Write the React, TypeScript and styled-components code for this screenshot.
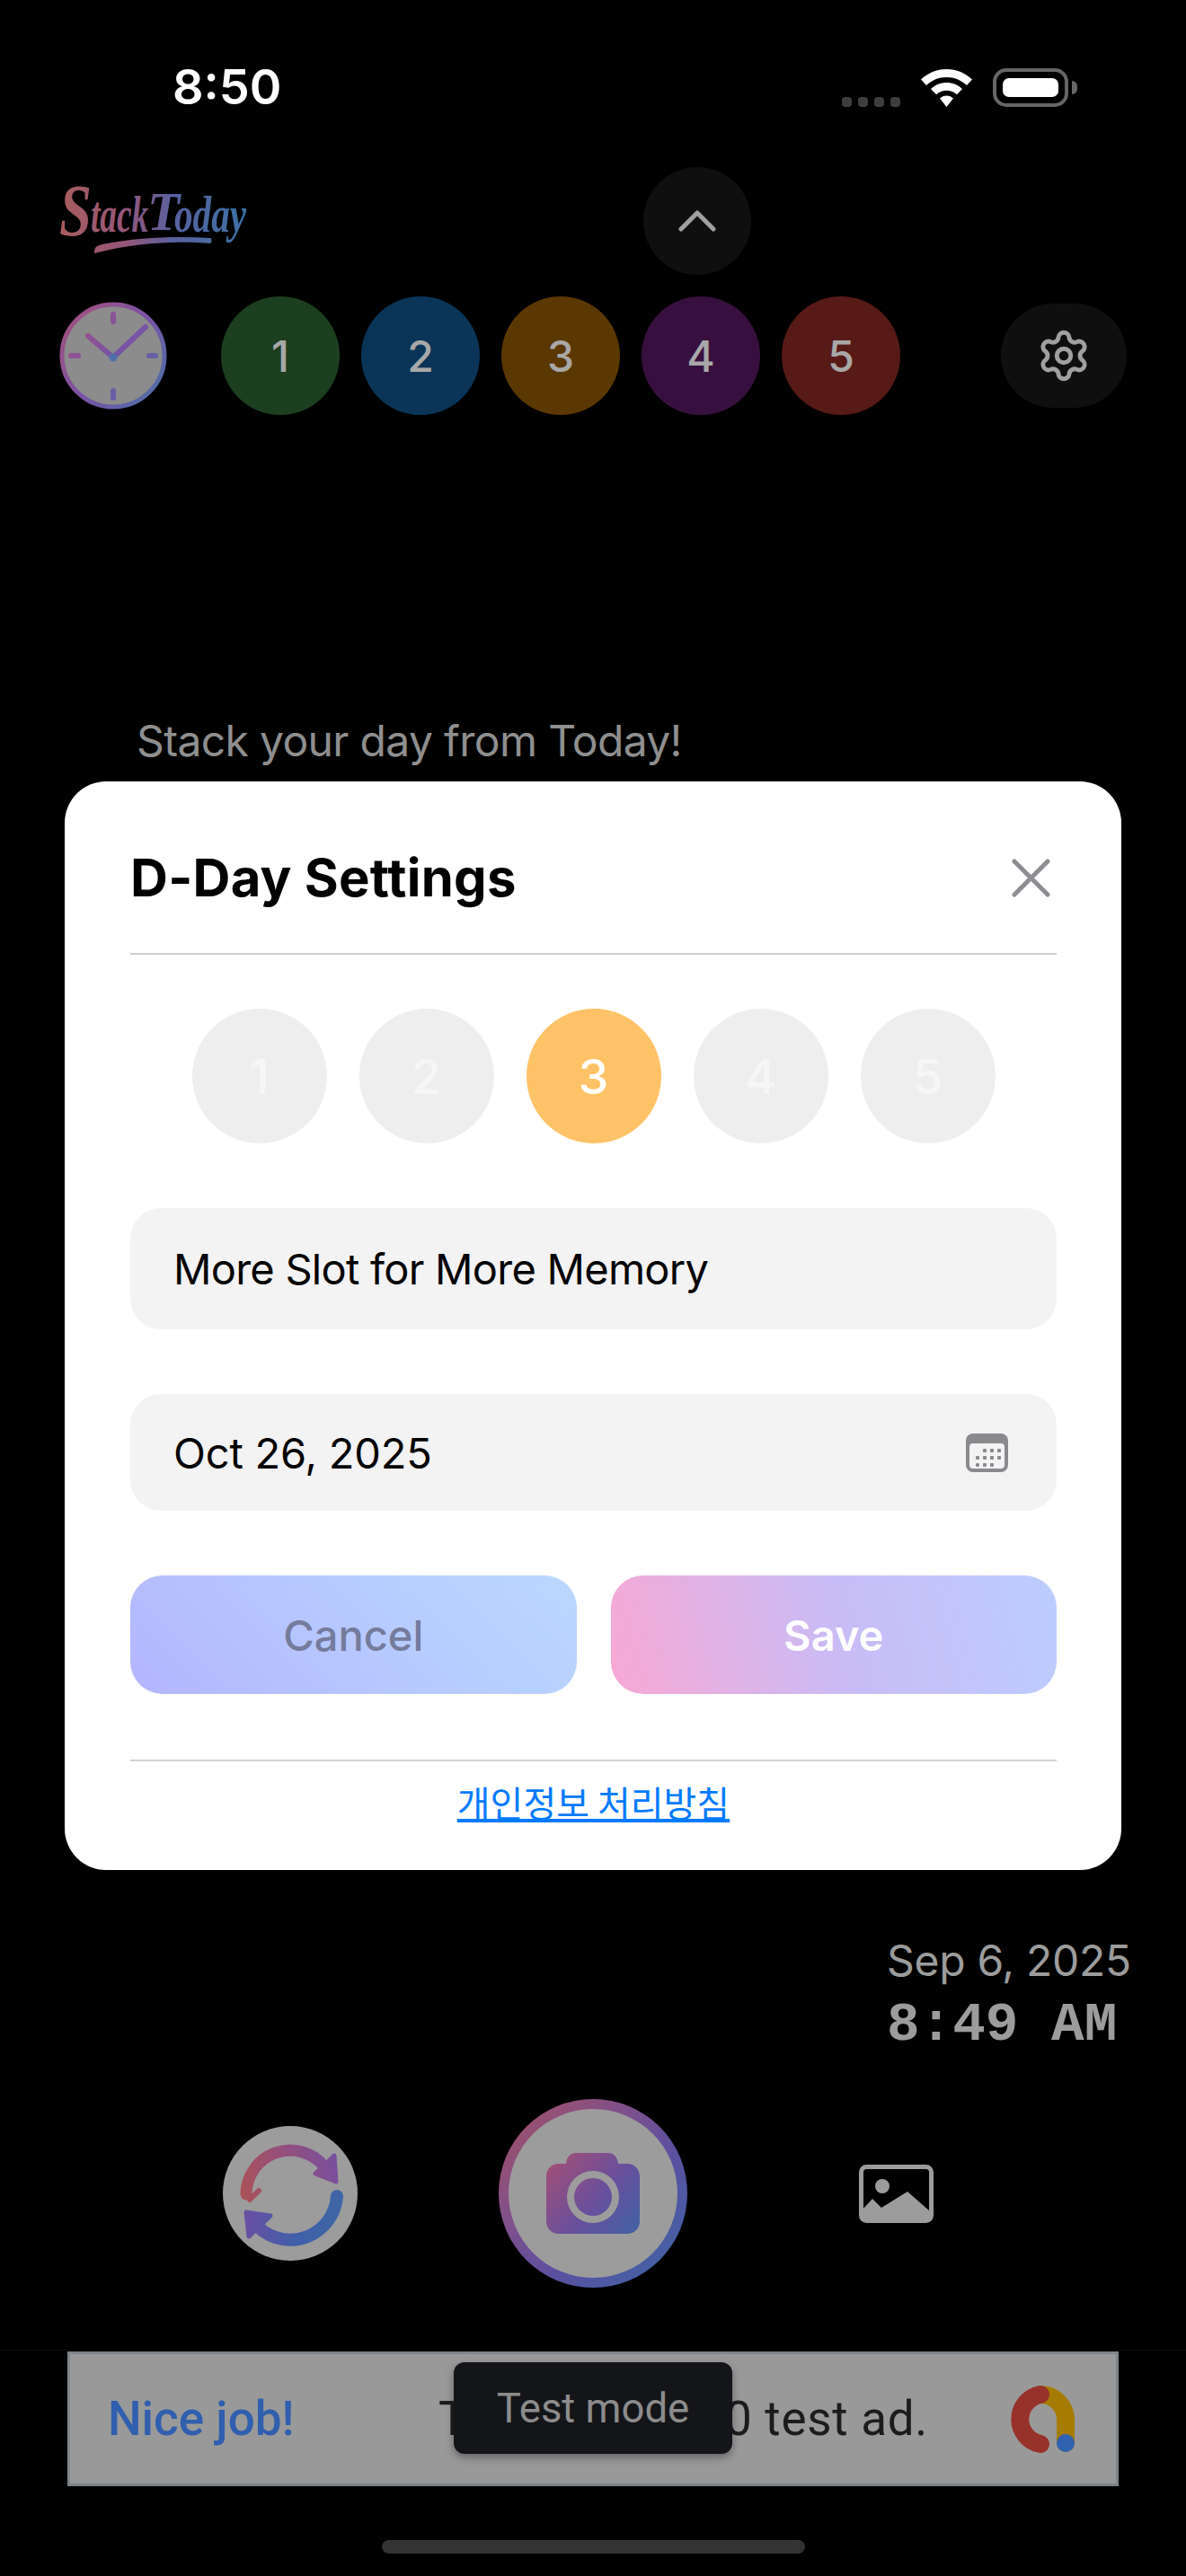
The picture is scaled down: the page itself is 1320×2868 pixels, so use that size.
import React from "react";
import styled, { createGlobalStyle } from "styled-components";
import { Settings } from "lucide-react";

const GlobalStyle = createGlobalStyle`
    html, body {
        margin: 0;
        padding: 0;
        background: #000;
    }
    * {
        box-sizing: border-box;
    }
`;

const slotColors = ["#1c3f1f", "#0a3558", "#5b3800", "#38103f", "#571a16"];
const slots = [1, 2, 3, 4, 5];

// script wordmark, set as real text pieces since no script font is installed
const logoParts = [
    { text: "S", x: 0, y: 52, size: 82, len: 36 },
    { text: "tack", x: 35, y: 48, size: 56, len: 64 },
    { text: "T", x: 98, y: 46, size: 62, len: 36 },
    { text: "oday", x: 128, y: 48, size: 56, len: 80 }
];

const Logo = () => (
    <LogoSvg viewBox="0 0 210 72">
        <defs>
            <linearGradient id="logoGrad" x1="0" x2="210" y1="0" y2="0" gradientUnits="userSpaceOnUse">
                <stop offset="0" stopColor="#a85c5c" />
                <stop offset="0.35" stopColor="#96567a" />
                <stop offset="0.6" stopColor="#58609f" />
                <stop offset="1" stopColor="#3a72a6" />
            </linearGradient>
        </defs>
        {logoParts.map(p => (
            <text
                key={p.text}
                x={p.x}
                y={p.y}
                fill="url(#logoGrad)"
                fontFamily="'Liberation Serif', serif"
                fontStyle="italic"
                fontWeight="700"
                fontSize={p.size}
                textLength={p.len}
                lengthAdjust="spacingAndGlyphs"
            >
                {p.text}
            </text>
        ))}
        <path
            d="M39 72 C39 66 40 64 48 62 C90 54 130 53 168 55 C170 55 170 60 168 61 C130 58 85 60 39 72 Z"
            fill="url(#logoGrad)"
        />
    </LogoSvg>
);

const ClockIcon = () => (
    <svg width="120" height="120" viewBox="0 0 120 120">
        <defs>
            <linearGradient id="clockGrad" x1="0" y1="10" x2="120" y2="110" gradientUnits="userSpaceOnUse">
                <stop offset="0" stopColor="#a8507a" />
                <stop offset="0.5" stopColor="#7a52a6" />
                <stop offset="1" stopColor="#4a72a8" />
            </linearGradient>
        </defs>
        <circle cx="60" cy="60" r="57" fill="#8c8c8c" stroke="url(#clockGrad)" strokeWidth="5" />
        <g stroke="url(#clockGrad)" strokeWidth="6" strokeLinecap="round" fill="none">
            <path d="M60 14V22" />
            <path d="M60 99V107" />
            <path d="M13 60H21" />
            <path d="M100 60H107" />
            <path d="M32 38L60 62L96 28" />
        </g>
        <circle cx="60" cy="62" r="4.5" fill="#4a72a8" />
    </svg>
);

const RefreshIcon = () => (
    <svg width="150" height="150" viewBox="0 0 150 150">
        <defs>
            <linearGradient id="refreshTop" x1="20" y1="75" x2="128" y2="50" gradientUnits="userSpaceOnUse">
                <stop offset="0" stopColor="#aa5258" />
                <stop offset="0.4" stopColor="#9a4f74" />
                <stop offset="1" stopColor="#7a4f9e" />
            </linearGradient>
            <linearGradient id="refreshBottom" x1="25" y1="100" x2="130" y2="110" gradientUnits="userSpaceOnUse">
                <stop offset="0" stopColor="#6a4fa2" />
                <stop offset="0.55" stopColor="#3f5fa8" />
                <stop offset="1" stopColor="#3f66a6" />
            </linearGradient>
        </defs>
        <path d="M26 76A49 49 0 0 1 112 44" fill="none" stroke="url(#refreshTop)" strokeWidth="13" strokeLinecap="round" />
        <path d="M30 82L40 72" fill="none" stroke="url(#refreshTop)" strokeWidth="6" strokeLinecap="round" />
        <path d="M124 33L126 62L103 53Z" fill="url(#refreshTop)" stroke="url(#refreshTop)" strokeWidth="5" strokeLinejoin="round" />
        <path d="M127 78A52 52 0 0 1 40 113" fill="none" stroke="url(#refreshBottom)" strokeWidth="14" strokeLinecap="round" />
        <path d="M26 96L29 123L53 100Z" fill="url(#refreshBottom)" stroke="url(#refreshBottom)" strokeWidth="5" strokeLinejoin="round" />
    </svg>
);

const CameraIcon = () => (
    <svg width="104" height="90" viewBox="0 0 104 90">
        <defs>
            <linearGradient id="camGrad" x1="0" y1="0" x2="104" y2="90" gradientUnits="userSpaceOnUse">
                <stop offset="0" stopColor="#a84f72" />
                <stop offset="0.55" stopColor="#6a4f9c" />
                <stop offset="1" stopColor="#3f62a4" />
            </linearGradient>
        </defs>
        <path
            fillRule="evenodd"
            fill="url(#camGrad)"
            d="M14 12H22C23 4 27 0 33 0H69C75 0 79 4 80 12H90C98 12 104 18 104 26V76C104 84 98 90 90 90H14C6 90 0 84 0 76V26C0 18 6 12 14 12ZM52 20A29 29 0 1 0 52 78A29 29 0 1 0 52 20ZM52 28A21 21 0 1 1 52 70A21 21 0 1 1 52 28Z"
        />
    </svg>
);

const GalleryIcon = () => (
    <svg width="83" height="65" viewBox="0 0 83 65">
        <rect x="2.5" y="2.5" width="78" height="60" rx="6" fill="none" stroke="#9c9c9c" strokeWidth="5" />
        <circle cx="26" cy="24" r="8" fill="#9c9c9c" />
        <path d="M4 50L15 38L25 48L54 30L79 52V62H4Z" fill="#9c9c9c" />
    </svg>
);

const CalendarIcon = () => {
    const rows = [
        { y: 17, xs: [19, 27, 35] },
        { y: 25, xs: [11, 19, 27, 35] },
        { y: 33, xs: [11, 19, 27] }
    ];
    return (
        <svg width="47" height="43" viewBox="0 0 47 43">
            <rect width="47" height="43" rx="8" fill="#8a8a8e" />
            <rect x="4" y="11" width="39" height="28" rx="4" fill="#f3f3f3" />
            {rows.map(r =>
                r.xs.map(x => <rect key={`${r.y}-${x}`} x={x} y={r.y} width="4" height="4" rx="1" fill="#8a8a8e" />)
            )}
        </svg>
    );
};

const AdLogo = () => (
    <svg width="77" height="75" viewBox="0 0 77 75">
        <path d="M39 10A28 28 0 0 1 67 38V64" fill="none" stroke="#a67c00" strokeWidth="20" strokeLinecap="round" />
        <path d="M39 10A28 28 0 0 0 39 65" fill="none" stroke="#97322a" strokeWidth="20" strokeLinecap="round" />
        <circle cx="67" cy="64" r="10" fill="#2f62b0" />
    </svg>
);

const App = () => {
    return (
        <>
            <GlobalStyle />
            <Screen>
                <StatusBar>
                    <StatusTime>8:50</StatusTime>
                    <StatusIcons>
                        <SignalDots>
                            {slots.slice(0, 4).map(n => (
                                <span key={n} />
                            ))}
                        </SignalDots>
                        <svg width="57" height="42" viewBox="0 0 57 42">
                            <path
                                fill="#fff"
                                d="M28.5 0C39.5 0 49.5 4.3 57 11.5L51 18C45 12.3 37.2 9 28.5 9S12 12.3 6 18L0 11.5C7.5 4.3 17.5 0 28.5 0Z"
                            />
                            <path
                                fill="#fff"
                                d="M28.5 15C35.2 15 41.3 17.6 46 22L40 28.3C36.9 25.5 32.9 23.8 28.5 23.8S20.1 25.5 17 28.3L11 22C15.7 17.6 21.8 15 28.5 15Z"
                            />
                            <path fill="#fff" d="M28.5 29.5C31.3 29.5 33.9 30.6 36 32.4L28.5 42L21 32.4C23.1 30.6 25.7 29.5 28.5 29.5Z" />
                        </svg>
                        <Battery>
                            <BatteryFill />
                        </Battery>
                    </StatusIcons>
                </StatusBar>

                <LogoRow>
                    <Logo />
                    <CollapseButton>
                        <svg width="42" height="24" viewBox="0 0 42 24">
                            <path d="M3 21L21 3L39 21" fill="none" stroke="#a0a0a0" strokeWidth="5" strokeLinecap="round" strokeLinejoin="round" />
                        </svg>
                    </CollapseButton>
                </LogoRow>

                <SlotRow>
                    <ClockIcon />
                    <DaySlots>
                        {slots.map(n => (
                            <DaySlot key={n} $color={slotColors[n - 1]}>
                                {n}
                            </DaySlot>
                        ))}
                    </DaySlots>
                    <SettingsButton>
                        <Settings size={62} color="#a0a0a0" strokeWidth={1.9} />
                    </SettingsButton>
                </SlotRow>

                <Tagline>Stack your day from Today!</Tagline>

                <DateBlock>
                    <DateText>Sep 6, 2025</DateText>
                    <TimeText>8:49 AM</TimeText>
                </DateBlock>

                <Controls>
                    <RefreshButton>
                        <RefreshIcon />
                    </RefreshButton>
                    <ShutterRing>
                        <Shutter>
                            <CameraIcon />
                        </Shutter>
                    </ShutterRing>
                    <GalleryButton>
                        <GalleryIcon />
                    </GalleryButton>
                </Controls>

                <AdArea>
                    <AdBanner>
                        <AdTitle>Nice job!</AdTitle>
                        <AdText>
                            <AdTextCovered>This is a 320x5</AdTextCovered>0 test ad.
                        </AdText>
                        <AdLogo />
                        <Toast>Test mode</Toast>
                    </AdBanner>
                </AdArea>

                <HomeIndicator />

                <Overlay>
                    <Modal>
                        <ModalHeader>
                            <ModalTitle>D-Day Settings</ModalTitle>
                            <CloseButton>
                                <svg width="43" height="43" viewBox="0 0 43 43">
                                    <path d="M3 3L40 40M40 3L3 40" stroke="#8e8e93" strokeWidth="5" strokeLinecap="round" />
                                </svg>
                            </CloseButton>
                        </ModalHeader>

                        <Picker>
                            {slots.map(n => (
                                <PickerItem key={n} $active={n === 3}>
                                    {n}
                                </PickerItem>
                            ))}
                        </Picker>

                        <Field $height={135} $tracking={-0.75}>
                            More Slot for More Memory
                        </Field>
                        <Field $height={130} $tracking={-0.2}>
                            Oct 26, 2025
                            <CalendarIcon />
                        </Field>

                        <ButtonRow>
                            <CancelButton>Cancel</CancelButton>
                            <SaveButton>Save</SaveButton>
                        </ButtonRow>

                        <ModalFooter>
                            <PolicyLink href="#">개인정보 처리방침</PolicyLink>
                        </ModalFooter>
                    </Modal>
                </Overlay>
            </Screen>
        </>
    );
};

const Screen = styled.div`
    position: relative;
    display: flex;
    flex-direction: column;
    width: 1320px;
    height: 2868px;
    overflow: hidden;
    background: #000;
    font-family: "Inter", "Noto Sans CJK KR", sans-serif;
`;

const StatusBar = styled.div`
    display: flex;
    align-items: center;
    height: 194px;
    padding: 0 131px 0 192px;
`;

const StatusTime = styled.div`
    font-size: 54px;
    line-height: 60px;
    font-weight: 600;
    color: #fff;
`;

const StatusIcons = styled.div`
    display: flex;
    align-items: flex-end;
    gap: 23px;
    margin-left: auto;
`;

const SignalDots = styled.div`
    display: flex;
    gap: 7px;
    span {
        width: 11px;
        height: 11px;
        border-radius: 4px;
        background: #3e3e3e;
    }
`;

const Battery = styled.div`
    position: relative;
    width: 84px;
    height: 43px;
    padding: 7px;
    border: 4px solid #666;
    border-radius: 15px;
    &::after {
        content: "";
        position: absolute;
        top: 10px;
        right: -14px;
        width: 6px;
        height: 15px;
        border-radius: 0 6px 6px 0;
        background: #666;
    }
`;

const BatteryFill = styled.div`
    width: 100%;
    height: 100%;
    border-radius: 7px;
    background: #fff;
`;

const LogoSvg = styled.svg`
    display: block;
    width: 210px;
    height: 72px;
    overflow: visible;
`;

const LogoRow = styled.div`
    display: flex;
    align-items: center;
    gap: 440px;
    height: 120px;
    margin-top: -8px;
    padding-left: 66px;
`;

const CollapseButton = styled.div`
    display: flex;
    align-items: center;
    justify-content: center;
    width: 120px;
    height: 120px;
    border-radius: 50%;
    background: #0f0f0f;
`;

const SlotRow = styled.div`
    display: flex;
    align-items: center;
    height: 132px;
    margin-top: 24px;
    padding: 0 66px;
`;

const DaySlots = styled.div`
    display: flex;
    gap: 24px;
    margin-left: 60px;
`;

const DaySlot = styled.div<{ $color: string }>`
    display: flex;
    align-items: center;
    justify-content: center;
    width: 132px;
    height: 132px;
    border-radius: 50%;
    background: ${p => p.$color};
    color: #a8a8a8;
    font-size: 48px;
    font-weight: 500;
`;

const SettingsButton = styled.div`
    display: flex;
    align-items: center;
    justify-content: center;
    width: 140px;
    height: 116px;
    margin-left: auto;
    border-radius: 58px;
    background: #0f0f0f;
`;

const Tagline = styled.div`
    margin-top: 333px;
    padding-left: 152px;
    font-size: 48px;
    line-height: 60px;
    letter-spacing: -0.65px;
    color: #8f8f8f;
`;

const DateBlock = styled.div`
    display: flex;
    flex-direction: column;
    gap: 12px;
    margin-top: 1300px;
    padding-left: 987px;
`;

const DateText = styled.div`
    font-size: 48px;
    line-height: 56px;
    letter-spacing: -0.3px;
    color: #9c9c9c;
`;

const TimeText = styled.div`
    font-family: "Liberation Mono", monospace;
    font-size: 61px;
    line-height: 64px;
    font-weight: 700;
    color: #9c9c9c;
`;

const Controls = styled.div`
    display: flex;
    align-items: center;
    height: 210px;
    margin-top: 50px;
    padding-left: 248px;
`;

const RefreshButton = styled.div`
    width: 150px;
    height: 150px;
    border-radius: 50%;
    background: #9c9c9c;
    svg {
        display: block;
    }
`;

const ShutterRing = styled.div`
    width: 210px;
    height: 210px;
    margin-left: 157px;
    padding: 11px;
    border-radius: 50%;
    background: linear-gradient(135deg, #a8505f 0%, #80508c 35%, #5c4fa0 60%, #3a68a8 100%);
`;

const Shutter = styled.div`
    display: flex;
    align-items: center;
    justify-content: center;
    width: 100%;
    height: 100%;
    border-radius: 50%;
    background: #9c9c9c;
`;

const GalleryButton = styled.div`
    display: flex;
    margin-left: 191px;
`;

const AdArea = styled.div`
    height: 151px;
    margin-top: 69px;
    padding: 1px 75px 0;
    border-top: 1px solid #0c0c0c;
`;

const AdBanner = styled.div`
    position: relative;
    display: flex;
    align-items: center;
    height: 150px;
    padding: 0 46px 0 42px;
    border: 3px solid #7e8488;
    background: #999;
`;

const AdTitle = styled.div`
    width: 368px;
    font-family: "Roboto", sans-serif;
    font-size: 53px;
    font-weight: 500;
    color: #2f5fae;
`;

const AdText = styled.div`
    flex: 1;
    font-family: "Roboto", sans-serif;
    font-size: 53px;
    letter-spacing: 0.7px;
    color: #1c1c1c;
    white-space: nowrap;
`;

// sits behind the toast, tightened so only the end of the line shows
const AdTextCovered = styled.span`
    letter-spacing: -2.4px;
`;

const Toast = styled.div`
    position: absolute;
    top: 9px;
    left: 427px;
    display: flex;
    align-items: center;
    justify-content: center;
    width: 310px;
    height: 102px;
    border-radius: 12px;
    background: #141518;
    box-shadow: 0 4px 10px rgba(0, 0, 0, 0.35);
    color: #8c8c8c;
    font-family: "Roboto", sans-serif;
    font-size: 45.5px;
    letter-spacing: 0;
`;

const HomeIndicator = styled.div`
    width: 471px;
    height: 15px;
    margin: 61px 0 0 425px;
    border-radius: 8px;
    background: #333;
`;

const Overlay = styled.div`
    position: absolute;
    top: 870px;
    left: 72px;
    right: 72px;
`;

const Modal = styled.div`
    height: 1212px;
    padding: 72px 72px 0 73px;
    border-radius: 46px;
    background: #fff;
`;

const ModalHeader = styled.div`
    display: flex;
    align-items: center;
    justify-content: space-between;
    padding: 0 7px 49px 0;
    border-bottom: 2px solid #cfcfcf;
`;

const ModalTitle = styled.div`
    font-size: 58px;
    line-height: 70px;
    font-weight: 700;
    letter-spacing: 0.25px;
    color: #000;
`;

const CloseButton = styled.div`
    display: flex;
`;

const Picker = styled.div`
    display: flex;
    justify-content: center;
    gap: 36px;
    margin: 60px 0 72px;
`;

const PickerItem = styled.div<{ $active: boolean }>`
    display: flex;
    align-items: center;
    justify-content: center;
    width: 150px;
    height: 150px;
    border-radius: 50%;
    background: ${p => (p.$active ? "#ffc266" : "#eeeeee")};
    color: ${p => (p.$active ? "#fff" : "#f6f6f6")};
    font-size: 54px;
    font-weight: 550;
`;

const Field = styled.div<{ $height: number; $tracking: number }>`
    display: flex;
    align-items: center;
    justify-content: space-between;
    height: ${p => p.$height}px;
    margin-bottom: 72px;
    padding: 0 54px 0 48px;
    border-radius: 34px;
    background: #f3f3f3;
    color: #000;
    font-size: 47px;
    letter-spacing: ${p => p.$tracking}px;
`;

const ButtonRow = styled.div`
    display: flex;
    gap: 38px;
`;

const ActionButton = styled.button`
    flex: 1;
    height: 132px;
    padding: 0;
    border: none;
    border-radius: 36px;
    font-family: "Inter", sans-serif;
    font-size: 47px;
`;

const CancelButton = styled(ActionButton)`
    background: linear-gradient(45deg, #b4b5ff 0%, #b7ccff 60%, #bbd8ff 100%);
    color: #757b9b;
    font-weight: 500;
`;

const SaveButton = styled(ActionButton)`
    background: linear-gradient(75deg, #f8a8d4 0%, #c8bcf6 52%, #bccdff 100%);
    color: #fff;
    font-weight: 600;
`;

const ModalFooter = styled.div`
    display: flex;
    justify-content: center;
    margin-top: 73px;
    padding-top: 17px;
    border-top: 2px solid #d4d4d4;
`;

const PolicyLink = styled.a`
    font-family: "Noto Sans CJK KR", sans-serif;
    font-size: 40px;
    line-height: 56px;
    color: #007aff;
    text-decoration: underline;
`;

export default App;
